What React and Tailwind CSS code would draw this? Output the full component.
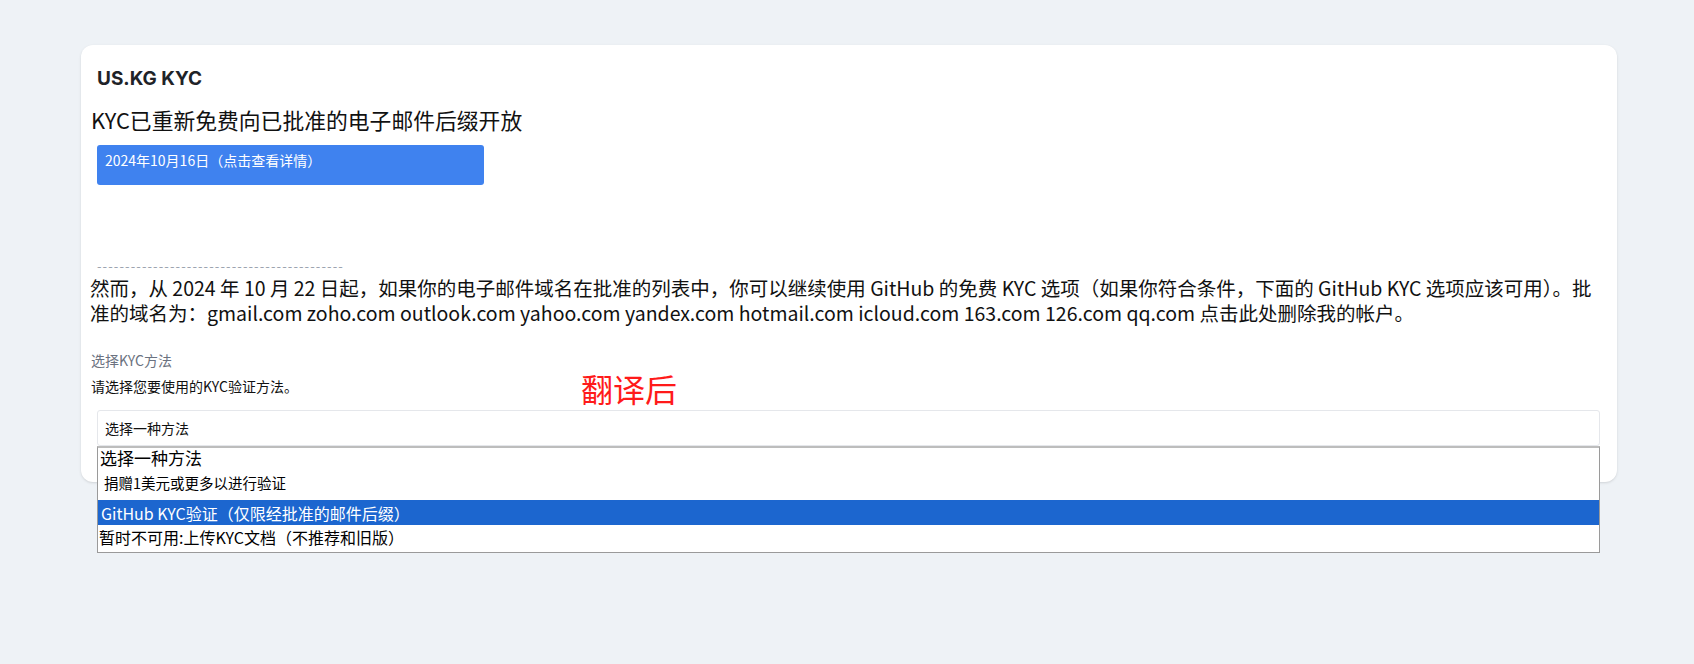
import React from 'react';

const options = [
  { label: '选择一种方法', cls: 'h-[20px] pl-[2px] text-[17px] text-black' },
  { label: '捐赠1美元或更多以进行验证', cls: 'h-[32px] pl-[6px] pb-[3px] text-[14.5px] text-black' },
  { label: 'GitHub KYC验证（仅限经批准的邮件后缀）', cls: 'h-[25px] pl-[3px] text-[16px] text-white bg-[#1c66cf]' },
  { label: '暂时不可用:上传KYC文档（不推荐和旧版）', cls: 'h-[27px] pl-[1px] pb-[3px] text-[16px] text-black' },
];

const App = () => {
  return (
    <div className="min-h-screen bg-[#eef2f6] pt-[45px] font-['Noto_Sans_CJK_SC',sans-serif]">
      <div className="relative ml-[81px] w-[1536px] h-[437px] bg-white rounded-xl shadow-sm pt-[22px]">
        {/* Header */}
        <h1 className="ml-[16px] text-[19px] leading-[24px] font-bold text-[#1f2328] font-['Inter',sans-serif]">
          US.KG KYC
        </h1>
        <h2 className="ml-[10px] mt-[15px] text-[21.8px] leading-[28px] text-[#111]">
          KYC已重新免费向已批准的电子邮件后缀开放
        </h2>
        <div className="ml-[16px] mt-[11px] w-[387px] h-[40px] bg-[#3f82ef] rounded-[3px] pl-[8px] pt-[5px] text-[14px] leading-[20px] text-white">
          2024年10月16日（点击查看详情）
        </div>

        {/* Notice */}
        <div className="ml-[16px] mt-[72px] text-[13px] leading-[18px] text-[#9ca3af] tracking-[1.1px] whitespace-nowrap">
          {'-'.repeat(44)}
        </div>
        <p className="ml-[9px] w-[1520px] text-[19.5px] leading-[25px] text-[#111] whitespace-nowrap">
          <span className="block">
            然而，从 2024 年 10 月 22 日起，如果你的电子邮件域名在批准的列表中，你可以继续使用 GitHub 的免费 KYC 选项（如果你符合条件，下面的 GitHub KYC 选项应该可用）。批
          </span>
          <span className="block">
            准的域名为：gmail.com zoho.com outlook.com yahoo.com yandex.com hotmail.com icloud.com 163.com 126.com qq.com 点击此处删除我的帐户。
          </span>
        </p>

        {/* KYC method */}
        <div className="ml-[10px] mt-[25px] text-[14px] leading-[20px] text-[#6b7280]">选择KYC方法</div>
        <div className="ml-[10px] mt-[6px] text-[14px] leading-[20px] text-[#111]">请选择您要使用的KYC验证方法。</div>

        <div className="ml-[16px] mt-[14px] w-[1503px] h-[36px] border border-[#e5e7eb] rounded-[3px] flex items-center pl-[7px] text-[14px] text-[#111]">
          选择一种方法
        </div>
        <div className="ml-[16px] w-[1503px] border border-[#9a9a9a] border-t-[#bdbdbd] border-t-2 bg-white">
          {options.map((o) => (
            <div key={o.label} className={`flex items-center ${o.cls}`}>
              {o.label}
            </div>
          ))}
        </div>

        {/* Overlay label */}
        <div className="absolute left-[500px] top-[327px] text-[32px] leading-none text-[#ff1a1a]">翻译后</div>
      </div>
    </div>
  );
};

export default App;
